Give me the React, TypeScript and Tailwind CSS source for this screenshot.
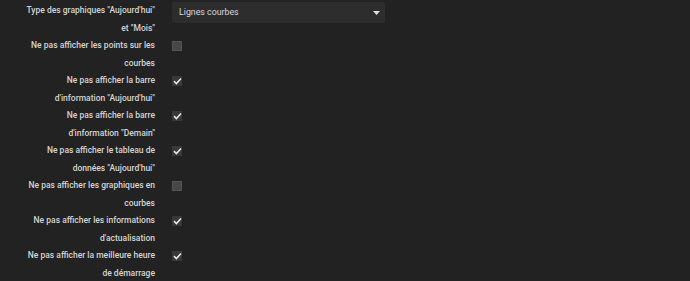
import React from "react";

const rows: { label: string[]; checked: boolean }[] = [
	{ label: ["Ne pas afficher les points sur les", "courbes"], checked: false },
	{ label: ["Ne pas afficher la barre", "d'information \"Aujourd'hui\""], checked: true },
	{ label: ["Ne pas afficher la barre", "d'information \"Demain\""], checked: true },
	{ label: ["Ne pas afficher le tableau de", "données \"Aujourd'hui\""], checked: true },
	{ label: ["Ne pas afficher les graphiques en", "courbes"], checked: false },
	{ label: ["Ne pas afficher les informations", "d'actualisation"], checked: true },
	{ label: ["Ne pas afficher la meilleure heure", "de démarrage"], checked: true },
];

const Check = ({ checked }: { checked: boolean }) =>
	checked ? (
		<div className="w-[10px] h-[10px] bg-[#383838] flex items-center justify-center">
			<svg width="9" height="8" viewBox="0 0 9 8">
				<path d="M1 4.2 L3.4 6.5 L8 1.5" stroke="#e6e6e6" strokeWidth="1.6" fill="none" />
			</svg>
		</div>
	) : (
		<div className="w-[10px] h-[10px] bg-[#474747] border border-[#555]" />
	);

const App = () => (
	<div className="w-[690px] h-[281px] bg-[#222222] overflow-hidden text-[#d4d4d4] text-[8.5px] font-medium leading-[17.5px]" style={{ fontFamily: "Roboto, sans-serif" }}>
		<div className="grid grid-cols-[155px_1fr] gap-x-[17px] pt-[2px]">
			<div className="text-right">
				<div>Type des graphiques "Aujourd'hui"</div>
				<div>et "Mois"</div>
			</div>
			<div>
				<div className="w-[213px] h-[21px] bg-[#2d2d2d] rounded-[2px] flex items-center justify-between pl-[7px] pr-[5px] text-[#d8d8d8] font-normal">
					<span className="text-[8.8px]">Lignes courbes</span>
					<svg width="7" height="4" viewBox="0 0 7 4">
						<path d="M0 0 H7 L3.5 4 Z" fill="#e0e0e0" />
					</svg>
				</div>
			</div>
			{rows.map((r, i) => (
				<React.Fragment key={i}>
					<div className="text-right">
						<div>{r.label[0]}</div>
						<div>{r.label[1]}</div>
					</div>
					<div className="pt-[4px]">
						<Check checked={r.checked} />
					</div>
				</React.Fragment>
			))}
		</div>
	</div>
);

export default App;
